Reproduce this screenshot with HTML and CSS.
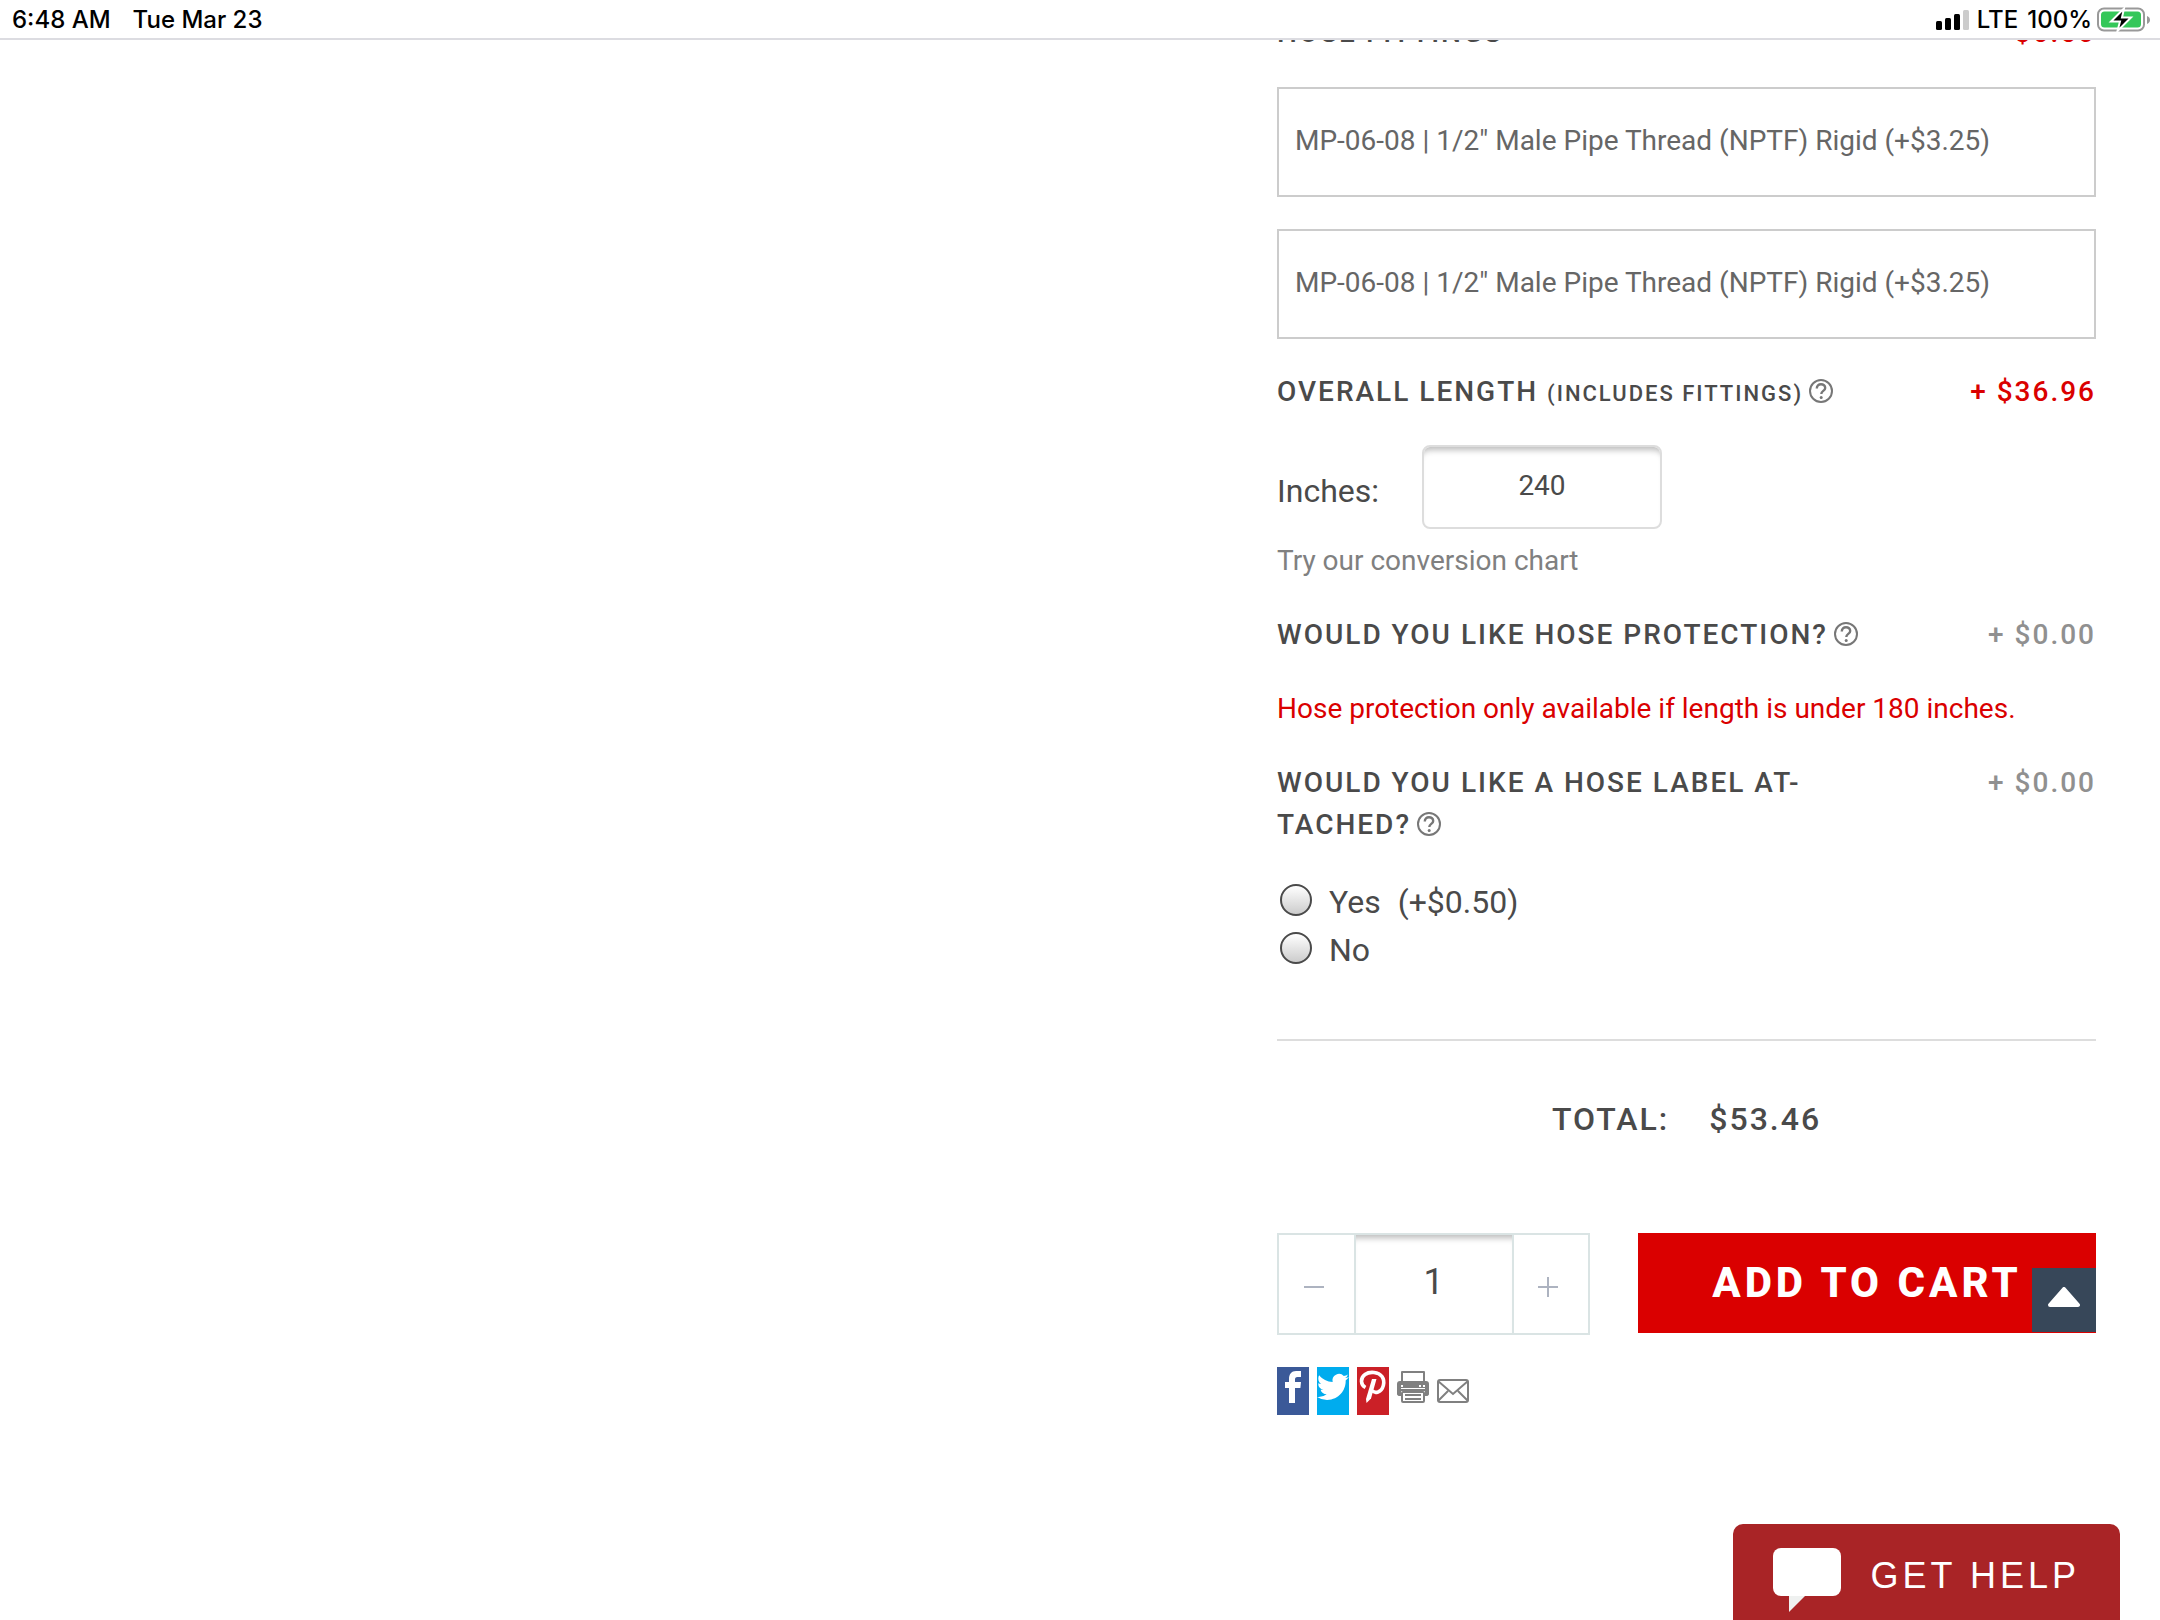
FILE: index.html
```html
<!DOCTYPE html>
<html lang="en">
<head>
<meta charset="utf-8">
<meta name="viewport" content="width=device-width, initial-scale=1">
<title>Hose assembly builder</title>
<link rel="stylesheet" href="styles.css">
</head>
<body>
<svg class="sprite" aria-hidden="true">
  <symbol id="help" viewBox="0 0 24 24">
    <circle cx="12" cy="12" r="11" fill="none" stroke="#777" stroke-width="2"/>
    <path d="M7.800 9.400C7.800 6.800 9.600 5.200 12 5.200s4.200 1.500 4.200 3.700c0 3-3.900 2.900-3.900 6" fill="none" stroke="#777" stroke-width="2.400"/>
    <circle cx="12.200" cy="18.400" r="1.500" fill="#777"/>
  </symbol>
</svg>

<header class="status">
  <div class="status-side">
    <span>6:48 AM</span>
    <span class="status-date">Tue Mar 23</span>
  </div>
  <div class="status-side">
    <svg class="signal" width="34" height="20" viewBox="0 0 34 20" aria-hidden="true">
      <rect x="0" y="11" width="6" height="9" rx="1.500"/>
      <rect x="9" y="8" width="6" height="12" rx="1.500"/>
      <rect x="18" y="4" width="6" height="16" rx="1.500"/>
      <rect x="27" y="0" width="6" height="20" rx="1.500" fill="#ccc"/>
    </svg>
    <span>LTE</span>
    <span class="status-percent">100%</span>
    <svg class="battery" width="54" height="26" viewBox="0 0 54 26" aria-hidden="true">
      <rect x="1" y="1.500" width="46" height="22" rx="6" fill="none" stroke="#999" stroke-width="2"/>
      <rect x="4" y="4.500" width="40" height="16" rx="3.500" fill="#34c759"/>
      <path d="M50 9v8c2-.8 3-2.200 3-4s-1-3.200-3-4z" fill="#999"/>
      <path d="M27 1.500 14 14.500h9L20.500 24 34 10.500h-9z" fill="#000" stroke="#fff" stroke-width="2"/>
    </svg>
  </div>
</header>

<main class="page">
  <form class="product">
    <div class="row-head row-head-first">
      <h2 class="label">Hose Fittings</h2>
      <span class="price price-on">+ $6.50</span>
    </div>
    <select class="fitting" aria-label="First hose fitting">
      <option>MP-06-08 | 1/2" Male Pipe Thread (NPTF) Rigid (+$3.25)</option>
    </select>
    <select class="fitting" aria-label="Second hose fitting">
      <option>MP-06-08 | 1/2" Male Pipe Thread (NPTF) Rigid (+$3.25)</option>
    </select>

    <div class="row-head">
      <h2 class="label">Overall Length <small>(Includes Fittings)</small> <svg class="help"><use href="#help"/></svg></h2>
      <span class="price price-on">+ $36.96</span>
    </div>
    <div class="length">
      <label for="inches">Inches:</label>
      <input id="inches" class="inches" type="text" value="240">
    </div>
    <a class="chart" href="#chart">Try our conversion chart</a>

    <div class="row-head">
      <h2 class="label">Would you like hose protection? <svg class="help"><use href="#help"/></svg></h2>
      <span class="price">+ $0.00</span>
    </div>
    <p class="warning">Hose protection only available if length is under 180 inches.</p>

    <div class="row-head">
      <h2 class="label">Would you like a hose label at-<br>tached? <svg class="help"><use href="#help"/></svg></h2>
      <span class="price">+ $0.00</span>
    </div>
    <div class="choices">
      <label class="choice"><input type="radio" name="tag"><span>Yes</span><span>(+$0.50)</span></label>
      <label class="choice"><input type="radio" name="tag"><span>No</span></label>
    </div>

    <div class="total"><span>Total:</span><span>$53.46</span></div>

    <div class="buy">
      <div class="qty">
        <button type="button" class="step" aria-label="Decrease quantity"><svg width="20" height="20" viewBox="0 0 20 20"><path d="M0 10h20"/></svg></button>
        <input class="count" type="text" value="1" aria-label="Quantity">
        <button type="button" class="step" aria-label="Increase quantity"><svg width="20" height="20" viewBox="0 0 20 20"><path d="M0 10h20M10 0v20"/></svg></button>
      </div>
      <div class="cart">
        <button type="submit" class="add">Add to Cart</button>
        <a class="to-top" href="#top" aria-label="Back to top"><svg width="32" height="20" viewBox="0 0 32 20"><path d="M16 2 30 18H2z" fill="#fff" stroke="#fff" stroke-width="4" stroke-linejoin="round"/></svg></a>
      </div>
    </div>

    <div class="share">
      <a class="tile facebook" href="#facebook" aria-label="Facebook"><svg width="32" height="48" viewBox="0 0 32 48"><path d="M12 36V21H8v-6h4v-3c0-5 2.500-8 7-8h5v6h-3.500C18.500 10 18 11 18 12.500V15h6l-.6 6H18v15z" fill="#fff"/></svg></a>
      <a class="tile twitter" href="#twitter" aria-label="Twitter"><svg width="32" height="48" viewBox="0 0 32 48"><path transform="translate(0 4) scale(1.330)" d="M23.950 4.570a10 10 0 0 1-2.820.770 4.960 4.960 0 0 0 2.160-2.720c-.95.550-2 .950-3.130 1.180a4.920 4.920 0 0 0-8.380 4.480C7.690 8.090 4.070 6.130 1.640 3.160a4.820 4.820 0 0 0-.67 2.480c0 1.710.870 3.210 2.190 4.090a4.900 4.900 0 0 1-2.230-.61v.06a4.920 4.920 0 0 0 3.950 4.830 5 5 0 0 1-2.210.080 4.940 4.940 0 0 0 4.600 3.420A9.870 9.870 0 0 1 0 19.540a13.990 13.990 0 0 0 7.560 2.210c9.050 0 14-7.500 14-13.980 0-.21 0-.42-.02-.63a9.940 9.940 0 0 0 2.460-2.550z" fill="#fff"/></svg></a>
      <a class="tile pinterest" href="#pinterest" aria-label="Pinterest"><svg width="32" height="48" viewBox="0 0 32 48"><path d="M8.500 20.500C3.500 18 3 11 8 7.500 13 4 21.500 5 25 9.500c3.500 5 1.500 13.500-4 15.500-2.500.8-4.800 0-5.800-1.600" fill="none" stroke="#fff" stroke-width="3.600"/><path d="M15 12h4.500L14 31.500 9.500 36 9 32z" fill="#fff"/></svg></a>
      <a class="tile" href="#print" aria-label="Print"><svg width="32" height="48" viewBox="0 0 32 48"><path d="M5 15V5h22v10" fill="none" stroke="#808080" stroke-width="2" stroke-linejoin="round"/><path d="M3 14h26a3 3 0 0 1 3 3v9a3 3 0 0 1-3 3H3a3 3 0 0 1-3-3v-9a3 3 0 0 1 3-3z" fill="#808080"/><path d="M5 23h22v12H5z" fill="#fff" stroke="#fff" stroke-width="4"/><path d="M0 20h4v9H3a3 3 0 0 1-3-3zM28 20h4v6a3 3 0 0 1-3 3h-1z" fill="#808080"/><rect x="5" y="25" width="22" height="10" rx="1" fill="#fff" stroke="#808080" stroke-width="2"/><path d="M4 22h24v2H4z" fill="#808080"/><path d="M8 28h16M8 32h16" stroke="#808080" stroke-width="2"/><path d="M22 19h2M26 19h2M4 19h2" stroke="#fff" stroke-width="2"/></svg></a>
      <a class="tile" href="#mail" aria-label="Email"><svg width="32" height="48" viewBox="0 0 32 48"><g fill="none" stroke="#808080" stroke-width="2"><rect x="1" y="13" width="30" height="22" rx="2"/><path d="M1 14 16 27 31 14M1 34l10-10M31 34 21 24"/></g></svg></a>
    </div>
  </form>
</main>

<button type="button" class="get-help">
  <svg width="68" height="64" viewBox="0 0 68 64" aria-hidden="true"><rect width="68" height="48" rx="8" fill="#fff"/><path d="M16 48h16L16 64z" fill="#eff1f0"/></svg>
  <span>GET HELP</span>
</button>
</body>
</html>
```

FILE: styles.css
```css
* { box-sizing: border-box; }

body {
  margin: 0;
  background: #fff;
  color: #4a4a4a;
  font-family: Roboto, "Liberation Sans", sans-serif;
  font-size: 28px;
  line-height: 42px;
}

button, input, select { font: inherit; color: inherit; margin: 0; border-radius: 0; }
a { color: inherit; text-decoration: none; }
.sprite { display: none; }

/* Tablet status bar, fixed over the scrolled page */
.status {
  position: fixed;
  z-index: 2;
  top: 0;
  left: 0;
  right: 0;
  height: 40px;
  padding: 2px 9px 0 12px;
  border-bottom: 2px solid #dcdce1;
  background: #fff;
  color: #000;
  font: 500 24px/36px Inter, "Liberation Sans", sans-serif;
  display: flex;
  justify-content: space-between;
}
.status-side { display: flex; align-items: center; }
.status-date { margin-left: 22px; }
.status-percent { margin: 0 5px 0 9px; }
.signal { margin-right: 7px; }

.page { padding: 12px 64px 0; }
.product { width: 819px; margin-left: auto; }

.row-head { display: flex; justify-content: space-between; margin-bottom: 32px; }
.row-head-first { margin-bottom: 33px; }
.label {
  margin: 0;
  font-size: 28px;
  font-weight: 500;
  letter-spacing: 2px;
  text-transform: uppercase;
}
.label small { font-size: 22px; line-height: 22px; }
.help { width: 24px; height: 24px; margin-left: -3px; vertical-align: -2px; }
.price { color: #909090; font-weight: 500; letter-spacing: 2px; }
.price-on { color: #da0000; }

.fitting {
  display: block;
  width: 100%;
  height: 110px;
  margin-bottom: 32px;
  padding: 0 16px 2px;
  border: 2px solid #ccc;
  background: #fff;
  color: #666;
  appearance: none;
}

.length { display: flex; align-items: center; gap: 43px; font-size: 32px; }
.length label { padding-top: 8px; }
.inches {
  width: 240px;
  height: 84px;
  padding: 0 0 4px;
  border: 2px solid #ddd;
  border-radius: 8px;
  box-shadow: inset 0 8px 6px -5px #bbb;
  font-size: 28px;
  text-align: center;
}
.chart { display: block; margin: 11px 0 32px; color: #808080; }
.warning { margin: 0 0 32px; color: #da0000; }

.choices { padding-bottom: 65px; border-bottom: 2px solid #ddd; }
.choice { display: flex; align-items: center; gap: 17px; height: 48px; font-size: 32px; }
.choice input {
  appearance: none;
  width: 32px;
  height: 32px;
  margin: 0 0 4px 3px;
  border: 2px solid #4a4a4a;
  border-radius: 50%;
  background: linear-gradient(#fff, #ccc);
}

.total {
  display: flex;
  justify-content: center;
  gap: 40px;
  padding: 57px 0 93px;
  font-size: 32px;
  font-weight: 500;
  letter-spacing: 2px;
  text-transform: uppercase;
}

.buy { display: flex; justify-content: space-between; align-items: flex-start; }
.qty { display: flex; width: 313px; height: 102px; border: 2px solid #dae4e4; }
.step {
  flex: 1;
  display: flex;
  align-items: center;
  justify-content: center;
  padding: 6px 5px 0 0;
  border: 0;
  background: none;
  stroke: #adb3c0;
  stroke-width: 2px;
}
.count {
  width: 160px;
  padding: 0 0 4px;
  border: 0 solid #dae4e4;
  border-width: 0 2px;
  box-shadow: inset 0 8px 6px -5px #bbb;
  font-size: 36px;
  text-align: center;
}
.cart { position: relative; width: 458px; }
.add {
  display: block;
  width: 100%;
  height: 100px;
  padding: 0;
  border: 0;
  background: #da0000;
  color: #fff;
  font-size: 42px;
  font-weight: 800;
  letter-spacing: 4px;
  text-transform: uppercase;
}
/* Floats over the corner of the cart button */
.to-top {
  position: absolute;
  right: 0;
  bottom: 1px;
  width: 64px;
  height: 64px;
  display: flex;
  align-items: center;
  justify-content: center;
  padding-bottom: 6px;
  background: #374759;
}

.share { display: flex; gap: 8px; padding: 32px 0 64px; }
.tile { display: flex; }
.facebook { background: #3b5998; }
.twitter { background: #00acee; }
.pinterest { background: #cb2027; }

.get-help {
  position: fixed;
  right: 40px;
  bottom: 0;
  height: 96px;
  padding: 16px 40px 0;
  border: 0;
  border-radius: 10px 10px 0 0;
  background: #a92426;
  color: #fff;
  display: flex;
  align-items: center;
  gap: 30px;
  font: 36px/48px "Liberation Sans", Arial, sans-serif;
  letter-spacing: 4px;
}
.get-help span { padding-bottom: 8px; }
```
